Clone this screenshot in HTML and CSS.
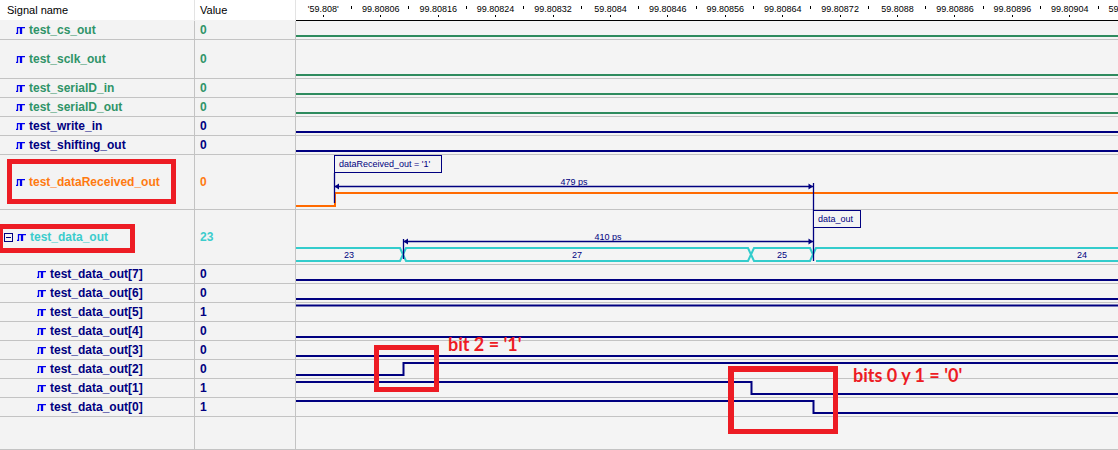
FILE: index.html
```html
<!DOCTYPE html>
<html>
<head>
<meta charset="utf-8">
<link rel="stylesheet" href="styles.css">
</head>
<body>
<div class="app">
  <div class="row hdr">
    <div class="c-name">Signal name</div>
    <div class="c-val">Value</div>
    <div class="c-wave">
      <div class="ruler">
        <div class="tick"><span class="lbl">'59.808'</span><i class="mk"></i></div>
        <div class="tick"><span class="lbl">99.80806</span><i class="mk"></i></div>
        <div class="tick"><span class="lbl">99.80816</span><i class="mk"></i></div>
        <div class="tick"><span class="lbl">99.80824</span><i class="mk"></i></div>
        <div class="tick"><span class="lbl">99.80832</span><i class="mk"></i></div>
        <div class="tick"><span class="lbl">59.8084</span><i class="mk"></i></div>
        <div class="tick"><span class="lbl">99.80846</span><i class="mk"></i></div>
        <div class="tick"><span class="lbl">99.80856</span><i class="mk"></i></div>
        <div class="tick"><span class="lbl">99.80864</span><i class="mk"></i></div>
        <div class="tick"><span class="lbl">99.80872</span><i class="mk"></i></div>
        <div class="tick"><span class="lbl">59.8088</span><i class="mk"></i></div>
        <div class="tick"><span class="lbl">99.80886</span><i class="mk"></i></div>
        <div class="tick"><span class="lbl">99.80896</span><i class="mk"></i></div>
        <div class="tick"><span class="lbl">99.80904</span><i class="mk"></i></div>
        <div class="tick"><span class="lbl">59.80912</span><i class="mk"></i></div>
      </div>
    </div>
  </div>

  <div class="row h18 green">
    <div class="c-name"><svg class="ico" viewBox="0 0 9 7"><path d="M0 6.5H1.5V0.5H4.5V6.5H5.5V0.5H9"/></svg><span>test_cs_out</span></div>
    <div class="c-val">0</div>
    <div class="c-wave"><svg width="822" height="18"><path class="w-green" d="M0 15H822"/></svg></div>
  </div>

  <div class="row h38 green">
    <div class="c-name"><svg class="ico" viewBox="0 0 9 7"><path d="M0 6.5H1.5V0.5H4.5V6.5H5.5V0.5H9"/></svg><span>test_sclk_out</span></div>
    <div class="c-val">0</div>
    <div class="c-wave"><svg width="822" height="38"><path class="w-green" d="M0 35H822"/></svg></div>
  </div>

  <div class="row h18 green">
    <div class="c-name"><svg class="ico" viewBox="0 0 9 7"><path d="M0 6.5H1.5V0.5H4.5V6.5H5.5V0.5H9"/></svg><span>test_serialD_in</span></div>
    <div class="c-val">0</div>
    <div class="c-wave"><svg width="822" height="18"><path class="w-green" d="M0 15H822"/></svg></div>
  </div>

  <div class="row h18 green">
    <div class="c-name"><svg class="ico" viewBox="0 0 9 7"><path d="M0 6.5H1.5V0.5H4.5V6.5H5.5V0.5H9"/></svg><span>test_serialD_out</span></div>
    <div class="c-val">0</div>
    <div class="c-wave"><svg width="822" height="18"><path class="w-green" d="M0 15H822"/></svg></div>
  </div>

  <div class="row h18 navy">
    <div class="c-name"><svg class="ico" viewBox="0 0 9 7"><path d="M0 6.5H1.5V0.5H4.5V6.5H5.5V0.5H9"/></svg><span>test_write_in</span></div>
    <div class="c-val">0</div>
    <div class="c-wave"><svg width="822" height="18"><path class="w-navy" d="M0 15H822"/></svg></div>
  </div>

  <div class="row h18 navy">
    <div class="c-name"><svg class="ico" viewBox="0 0 9 7"><path d="M0 6.5H1.5V0.5H4.5V6.5H5.5V0.5H9"/></svg><span>test_shifting_out</span></div>
    <div class="c-val">0</div>
    <div class="c-wave"><svg width="822" height="18"><path class="w-navy" d="M0 15H822"/></svg></div>
  </div>

  <div class="row h54 orange">
    <div class="c-name"><svg class="ico" viewBox="0 0 9 7"><path d="M0 6.5H1.5V0.5H4.5V6.5H5.5V0.5H9"/></svg><span>test_dataReceived_out</span></div>
    <div class="c-val">0</div>
    <div class="c-wave"><svg width="822" height="54"><path class="w-orange" d="M0 51H39V38H822"/></svg></div>
  </div>

  <div class="row h54 cyan">
    <div class="c-name expand"><svg class="box" viewBox="0 0 9 9"><rect x="0.5" y="0.5" width="8" height="8"/><path d="M2 4.5H7"/></svg><svg class="ico" viewBox="0 0 9 7"><path d="M0 6.5H1.5V0.5H4.5V6.5H5.5V0.5H9"/></svg><span>test_data_out</span></div>
    <div class="c-val">23</div>
    <div class="c-wave"><svg width="822" height="54">
      <path class="w-bus" d="M-4 38H104L107 44.5L104 51H-4"/>
      <path class="w-bus" d="M107 44.5L110 38H452L455 44.5L452 51H110Z"/>
      <path class="w-bus" d="M455 44.5L458 38H514L517 44.5L514 51H458Z"/>
      <path class="w-bus" d="M517 44.5L520 38H830M830 51H520Z"/>
      <text class="bus-t" x="53" y="47.5">23</text>
      <text class="bus-t" x="281" y="47.5">27</text>
      <text class="bus-t" x="486" y="47.5">25</text>
      <text class="bus-t" x="786" y="47.5">24</text>
    </svg></div>
  </div>

  <div class="row h18 navy sub">
    <div class="c-name"><svg class="ico" viewBox="0 0 9 7"><path d="M0 6.5H1.5V0.5H4.5V6.5H5.5V0.5H9"/></svg><span>test_data_out[7]</span></div>
    <div class="c-val">0</div>
    <div class="c-wave"><svg width="822" height="18"><path class="w-navy" d="M0 15H822"/></svg></div>
  </div>
  <div class="row h18 navy sub">
    <div class="c-name"><svg class="ico" viewBox="0 0 9 7"><path d="M0 6.5H1.5V0.5H4.5V6.5H5.5V0.5H9"/></svg><span>test_data_out[6]</span></div>
    <div class="c-val">0</div>
    <div class="c-wave"><svg width="822" height="18"><path class="w-navy" d="M0 15H822"/></svg></div>
  </div>
  <div class="row h18 navy sub">
    <div class="c-name"><svg class="ico" viewBox="0 0 9 7"><path d="M0 6.5H1.5V0.5H4.5V6.5H5.5V0.5H9"/></svg><span>test_data_out[5]</span></div>
    <div class="c-val">1</div>
    <div class="c-wave"><svg width="822" height="18"><path class="w-navy" d="M0 2.5H822"/></svg></div>
  </div>
  <div class="row h18 navy sub">
    <div class="c-name"><svg class="ico" viewBox="0 0 9 7"><path d="M0 6.5H1.5V0.5H4.5V6.5H5.5V0.5H9"/></svg><span>test_data_out[4]</span></div>
    <div class="c-val">0</div>
    <div class="c-wave"><svg width="822" height="18"><path class="w-navy" d="M0 15H822"/></svg></div>
  </div>
  <div class="row h18 navy sub">
    <div class="c-name"><svg class="ico" viewBox="0 0 9 7"><path d="M0 6.5H1.5V0.5H4.5V6.5H5.5V0.5H9"/></svg><span>test_data_out[3]</span></div>
    <div class="c-val">0</div>
    <div class="c-wave"><svg width="822" height="18"><path class="w-navy" d="M0 15H822"/></svg></div>
  </div>
  <div class="row h18 navy sub">
    <div class="c-name"><svg class="ico" viewBox="0 0 9 7"><path d="M0 6.5H1.5V0.5H4.5V6.5H5.5V0.5H9"/></svg><span>test_data_out[2]</span></div>
    <div class="c-val">0</div>
    <div class="c-wave"><svg width="822" height="18"><path class="w-navy" d="M0 15H107.5V3H822"/></svg></div>
  </div>
  <div class="row h18 navy sub">
    <div class="c-name"><svg class="ico" viewBox="0 0 9 7"><path d="M0 6.5H1.5V0.5H4.5V6.5H5.5V0.5H9"/></svg><span>test_data_out[1]</span></div>
    <div class="c-val">1</div>
    <div class="c-wave"><svg width="822" height="18"><path class="w-navy" d="M0 3H455.5V15H822"/></svg></div>
  </div>
  <div class="row h18 navy sub">
    <div class="c-name"><svg class="ico" viewBox="0 0 9 7"><path d="M0 6.5H1.5V0.5H4.5V6.5H5.5V0.5H9"/></svg><span>test_data_out[0]</span></div>
    <div class="c-val">1</div>
    <div class="c-wave"><svg width="822" height="18"><path class="w-navy" d="M0 3H517.5V15H822"/></svg></div>
  </div>

  <div class="row filler">
    <div class="c-name"></div>
    <div class="c-val"></div>
    <div class="c-wave"></div>
  </div>

  <svg class="markers" width="1118" height="450">
    <path class="mk-line" d="M334.5 173V203"/>
    <path class="mk-line" d="M334 186.5H813"/>
    <path class="mk-head" d="M334.5 186.5L339 183.5V189.5Z"/>
    <path class="mk-head" d="M813 186.5L808.5 183.5V189.5Z"/>
    <path class="mk-line" d="M813.5 183V261"/>
    <path class="mk-line" d="M403 241.5H813"/>
    <path class="mk-line" d="M403.5 239V259"/>
    <path class="mk-head" d="M403.5 241.5L408 238.5V244.5Z"/>
    <path class="mk-head" d="M813 241.5L808.5 238.5V244.5Z"/>
    <text class="mk-t" x="574" y="185">479 ps</text>
    <text class="mk-t" x="608" y="240">410 ps</text>
  </svg>
  <div class="tag tag1">dataReceived_out = '1'</div>
  <div class="tag tag2">data_out</div>

  <div class="redbox rb1"></div>
  <div class="redbox rb2"></div>
  <div class="redbox rb3"></div>
  <div class="redbox rb4"></div>
  <div class="note note1">bit 2 = '1'</div>
  <div class="note note2">bits 0 y 1 = '0'</div>
</div>
</body>
</html>
```

FILE: styles.css
```css
html, body {
  margin: 0;
  padding: 0;
  background: #f4f4f4;
  overflow: hidden;
}
.app {
  position: relative;
  width: 1118px;
  height: 450px;
  overflow: hidden;
  font-family: "Liberation Sans", Arial, sans-serif;
}
.row {
  display: flex;
  border-bottom: 1px solid #c3c3c3;
  box-sizing: content-box;
}
.c-name {
  width: 195px;
  flex: 0 0 195px;
  box-sizing: border-box;
  border-right: 1px solid #c3c3c3;
  background: #f3f3f3;
  display: flex;
  align-items: center;
  gap: 4px;
  padding-left: 16px;
  font-weight: bold;
  font-size: 12px;
  white-space: nowrap;
}
.c-val {
  width: 101px;
  flex: 0 0 101px;
  box-sizing: border-box;
  border-right: 1px solid #c3c3c3;
  background: #f3f3f3;
  display: flex;
  align-items: center;
  padding-left: 5px;
  font-weight: bold;
  font-size: 12px;
}
.c-wave {
  flex: 1 1 auto;
  background: #f4f4f4;
  overflow: hidden;
}
.c-wave svg {
  display: block;
}

/* header */
.hdr {
  border-bottom: 0;
  height: 21px;
}
.hdr .c-name,
.hdr .c-val {
  background: #fff;
  font-weight: normal;
  font-size: 11px;
  color: #000;
  padding-left: 7px;
  border-right-color: #e3e3e3;
  border-bottom: 1px solid #f3f3f3;
  align-items: flex-start;
  padding-top: 4px;
}
.hdr .c-val {
  padding-left: 5px;
}
.hdr .c-wave {
  background: #fff;
  border-bottom: 1px solid #000;
  height: 20px;
}
.ruler {
  display: flex;
  margin-left: -1.4px;
}
.tick {
  flex: 0 0 57.43px;
  display: flex;
  flex-direction: column;
  align-items: center;
  height: 20px;
  background: linear-gradient(#000, #000) no-repeat right 0 top 6px / 1px 3px;
}
.lbl {
  font-size: 9px;
  line-height: 9px;
  margin-top: 5px;
  color: #000;
  white-space: nowrap;
}
.mk {
  display: block;
  width: 1px;
  height: 2px;
  margin-top: 1px;
  background: #000;
}

/* row heights */
.h18 { height: 18px; }
.h38 { height: 38px; }
.h54 { height: 54px; }
.filler { height: 32px; }

.sub .c-name { padding-left: 37px; }
.expand { padding-left: 4px; }
.expand .box {
  width: 9px;
  height: 9px;
  margin-right: 0;
  fill: none;
  stroke: #000080;
  stroke-width: 1;
}

.ico {
  width: 9px;
  height: 7px;
  flex: 0 0 9px;
  fill: none;
  stroke: #0000ee;
  stroke-width: 1.3;
}

.green { color: #2f9468; }
.navy { color: #000080; }
.orange { color: #ff7a10; }
.cyan { color: #3ccccc; }

.w-green, .w-navy, .w-orange, .w-bus {
  fill: none;
  stroke-width: 2;
}
.w-green { stroke: #2e8b5e; }
.w-navy { stroke: #000080; }
.w-orange { stroke: #ff6a00; }
.w-bus { stroke: #33cccc; }
.bus-t {
  font-family: "Liberation Sans", Arial, sans-serif;
  font-size: 9px;
  fill: #000080;
  text-anchor: middle;
}

/* markers overlay */
.markers {
  position: absolute;
  left: 0;
  top: 0;
  pointer-events: none;
}
.mk-line {
  stroke: #000080;
  stroke-width: 1.3;
  fill: none;
}
.mk-head {
  fill: #000080;
}
.mk-t {
  font-family: "Liberation Sans", Arial, sans-serif;
  font-size: 9px;
  fill: #000080;
  text-anchor: middle;
}
.tag {
  position: absolute;
  box-sizing: border-box;
  height: 18px;
  border: 1px solid #000080;
  background: #f4f4f4;
  color: #000080;
  font-size: 9px;
  line-height: 16px;
  padding-left: 4px;
  white-space: nowrap;
}
.tag1 { left: 334px; top: 155px; width: 108px; }
.tag2 { left: 813px; top: 210px; width: 48px; }

/* annotations */
.redbox {
  position: absolute;
  box-sizing: border-box;
  border: 5px solid #ed1c24;
}
.rb1 { left: 7px; top: 159px; width: 169px; height: 45px; }
.rb2 { left: -2px; top: 224px; width: 137px; height: 29px; }
.rb3 { left: 374px; top: 345px; width: 65px; height: 47px; }
.rb4 { left: 728px; top: 366px; width: 110px; height: 68px; border-width: 6px 5px 5px 6px; }
.note {
  position: absolute;
  color: #ed1c24;
  font-family: "Lato", "Liberation Sans", sans-serif;
  font-weight: bold;
  font-size: 18px;
  line-height: 22px;
  white-space: nowrap;
}
.note1 { left: 448px; top: 333px; }
.note2 { left: 853px; top: 364px; }
```
